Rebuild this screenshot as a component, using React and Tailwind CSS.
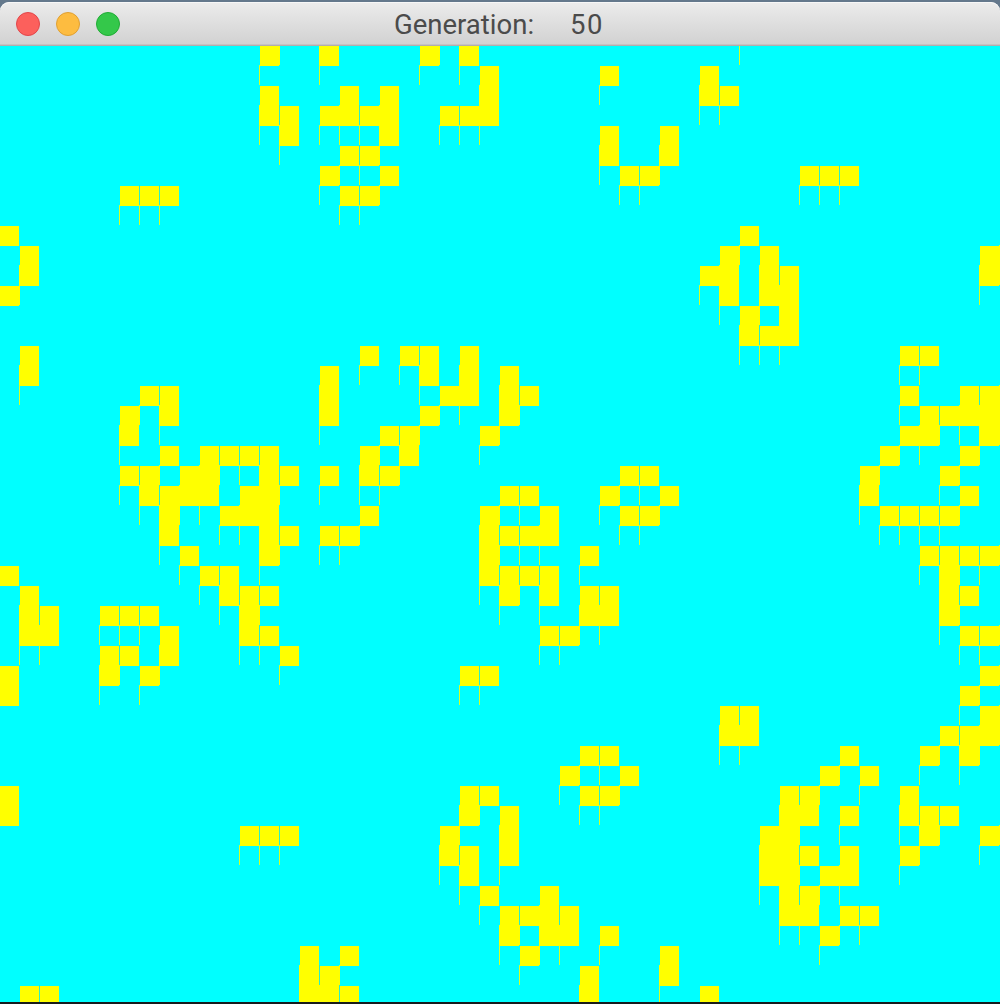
const HIDDEN_ROW = [14, 16, 22, 23, 37];

const ROWS = [
  [13, 16, 21, 23],
  [24, 30, 35],
  [13, 17, 19, 24, 35, 36],
  [13, 14, 16, 17, 18, 19, 22, 23, 24],
  [14, 19, 30, 33],
  [17, 18, 30, 33],
  [16, 19, 31, 32, 40, 41, 42],
  [6, 7, 8, 17, 18],
  [],
  [0, 37],
  [1, 36, 38, 49],
  [1, 35, 36, 38, 39, 49],
  [0, 36, 38, 39],
  [37, 39],
  [37, 38, 39],
  [1, 18, 20, 21, 23, 45, 46],
  [1, 16, 21, 23, 25],
  [7, 8, 16, 22, 23, 25, 26, 45, 48, 49],
  [6, 8, 16, 21, 25, 46, 47, 48, 49],
  [6, 19, 20, 24, 45, 46, 49],
  [8, 10, 11, 12, 13, 18, 20, 44, 48],
  [6, 7, 9, 10, 13, 14, 16, 18, 19, 31, 32, 43, 47],
  [7, 8, 9, 10, 12, 13, 25, 26, 30, 33, 43, 48],
  [8, 11, 12, 13, 18, 24, 27, 31, 32, 44, 45, 46, 47],
  [8, 13, 14, 16, 17, 24, 25, 26, 27],
  [9, 13, 24, 29, 46, 47, 48, 49],
  [0, 10, 11, 24, 25, 26, 27, 47],
  [1, 11, 12, 13, 25, 27, 29, 30, 47, 48],
  [1, 2, 5, 6, 7, 12, 29, 30, 47],
  [1, 2, 8, 12, 13, 27, 28, 48, 49],
  [5, 6, 8, 14],
  [0, 5, 7, 23, 24, 49],
  [0, 48],
  [36, 37, 49],
  [36, 37, 47, 48, 49],
  [29, 30, 42, 46, 48],
  [28, 31, 41, 43],
  [0, 23, 24, 29, 30, 39, 40, 45],
  [0, 23, 25, 39, 40, 42, 45, 46, 47],
  [12, 13, 14, 22, 25, 38, 39, 46, 49],
  [22, 23, 25, 38, 39, 40, 42, 45],
  [23, 38, 39, 41, 42],
  [24, 27, 39, 40],
  [25, 26, 27, 28, 39, 40, 42, 43],
  [25, 27, 28, 30, 41],
  [15, 17, 26, 33],
  [15, 16, 29, 33],
  [1, 2, 15, 16, 17, 29, 35],
];

const COLUMNS = Array.from({ length: 50 }, (_, c) => c);
const alive = (r, c) => (r < 0 ? HIDDEN_ROW : ROWS[r]).includes(c);

// The one-pixel seam left of a cell carries the state of the cell above it.
function seamColor(r, c) {
  if (c > 49) return alive(r, 49) ? "bg-[#ffff00]" : "bg-[#00ffff]";
  const left = alive(r, c - 1);
  const right = alive(r, c);
  if (alive(r - 1, c)) return left || right ? "bg-[#ffff00]" : "bg-[#d9ff26]";
  return left && right ? "bg-[#26eec8]" : "bg-[#00ffff]";
}

function Column({ c }) {
  return (
    <div className="flex w-5 shrink-0">
      <div className="w-[19px]">
        {ROWS.map((_, r) => (
          <div key={r} className={alive(r, c) ? "h-5 bg-[#ffff00]" : "h-5 bg-[#00ffff]"} />
        ))}
      </div>
      <div className="w-px">
        {ROWS.map((_, r) => (
          <div key={r} className={`${r === 0 ? "h-[19px]" : "h-5"} ${seamColor(r, c + 1)}`} />
        ))}
      </div>
    </div>
  );
}

export default function App() {
  return (
    <div className="flex h-[1004px] w-[1000px] flex-col overflow-hidden bg-[#64788c]">
      <header className="mt-0.5 grid h-11 shrink-0 grid-cols-[395px_1fr] items-center rounded-t-[9px] border-b border-[#b1adad] bg-linear-to-b from-[#ececec] to-[#d1d1d1] shadow-[inset_0_1px_0_#f7f7f7,inset_0_-1px_0_#c4c2c2]">
        <div className="flex gap-4 pl-4">
          <span className="size-6 rounded-full border border-[#e2464a] bg-[#fc605c]" />
          <span className="size-6 rounded-full border border-[#e0a032] bg-[#fdbc40]" />
          <span className="size-6 rounded-full border border-[#20ac35] bg-[#34c84a]" />
        </div>
        <h1 className="flex pt-[3px] font-['Roboto',sans-serif] text-[27.5px] leading-8 text-[#4b4b4b]">
          <span className="-ml-px w-[176px]">Generation:</span>
          <span className="tracking-[1.5px]">50</span>
        </h1>
      </header>
      <main className="flex h-[956px] shrink-0 overflow-hidden bg-[#00ffff]">
        {COLUMNS.map((c) => (
          <Column key={c} c={c} />
        ))}
      </main>
      <footer className="h-0.5 shrink-0 bg-[#171b1c]" />
    </div>
  );
}
